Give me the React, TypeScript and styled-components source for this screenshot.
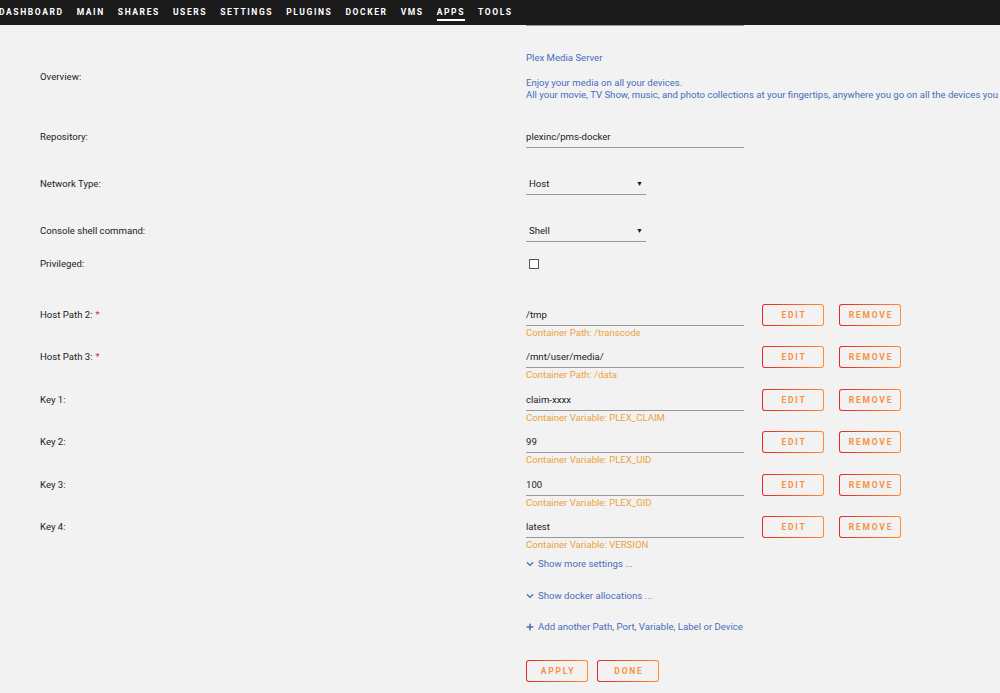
import React from 'react';
import styled, { createGlobalStyle } from 'styled-components';
import { FaChevronDown, FaPlus } from 'react-icons/fa';

const GlobalStyle = createGlobalStyle`
  html, body {
    margin: 0;
    padding: 0;
    background: #f2f2f2;
  }
  body {
    font-family: Roboto, "Liberation Sans", sans-serif;
    overflow: hidden;
    width: 1000px;
    height: 693px;
  }
`;

const TopBar = styled.div`
  height: 25px;
  background: #1c1b1b;
  display: flex;
  align-items: center;
`;

const Menu = styled.ul`
  list-style: none;
  margin: 0 0 0 -1px;
  padding: 0;
  display: flex;
  gap: 13px;
  height: 100%;
`;

const MenuItem = styled.li<{ $active?: boolean }>`
  display: flex;
  align-items: center;
  color: #fff;
  font-size: 8.5px;
  font-weight: 700;
  letter-spacing: 1.6px;

  span {
    padding-top: 3px;
    padding-bottom: 2px;
    border-bottom: 2px solid ${(p) => (p.$active ? '#fff' : 'transparent')};
  }
`;

const Form = styled.div`
  padding-left: 40px;
  font-size: 9.6px;
`;

const PrevField = styled.div`
  margin-left: 486px;
  width: 218px;
  border-bottom: 1px solid #999;
`;

const Row = styled.div<{ $top: number; $top_align?: boolean }>`
  display: flex;
  align-items: ${(p) => (p.$top_align ? 'flex-start' : 'center')};
  margin-top: ${(p) => p.$top}px;
`;

const Label = styled.div<{ $tall?: boolean }>`
  width: 486px;
  flex-shrink: 0;
  color: #1c1b1b;
  line-height: ${(p) => (p.$tall ? '21px' : '12px')};
`;

const Required = styled.span`
  color: #e22828;
  margin-left: 3px;
`;

const Overview = styled.div`
  color: #486dba;
  line-height: 12px;
  white-space: nowrap;

  p {
    margin: 0;
  }
  p + p {
    margin-top: 13px;
  }
`;

const Field = styled.input`
  box-sizing: border-box;
  width: 218px;
  height: 22px;
  margin: 0;
  padding: 0;
  border: none;
  border-bottom: 1px solid #999;
  background: transparent;
  font-family: inherit;
  font-size: 9.6px;
  color: #1c1b1b;
  outline: none;
`;

const SelectBox = styled.div`
  box-sizing: border-box;
  width: 120px;
  height: 22px;
  padding: 0 3px;
  display: flex;
  align-items: center;
  justify-content: space-between;
  border-bottom: 1px solid #999;
  color: #1c1b1b;
`;

const Caret = styled.span`
  font-size: 7px;
`;

const Check = styled.span`
  box-sizing: border-box;
  display: block;
  width: 10px;
  height: 10px;
  margin-left: 3px;
  background: #fff;
  border: 1px solid #555;
`;

const Cell = styled.div`
  display: flex;
  flex-direction: column;
`;

const Line = styled.div`
  display: flex;
  align-items: center;
`;

const Desc = styled.div`
  color: #eda23a;
  line-height: 12px;
  margin-top: 1px;
`;

const Button = styled.button<{ $gap?: number }>`
  box-sizing: border-box;
  width: 62px;
  height: 22px;
  margin: 0 0 0 ${(p) => p.$gap ?? 0}px;
  padding: 0 0 0 2px;
  border: 1px solid transparent;
  border-radius: 3px;
  background: linear-gradient(#f2f2f2, #f2f2f2) padding-box,
    linear-gradient(90deg, #e22828, #ff8c2f) border-box;
  color: #f7913e;
  font-family: inherit;
  font-size: 8.5px;
  font-weight: 700;
  letter-spacing: 1.8px;
  cursor: pointer;
`;

const Toggle = styled.div<{ $top: number }>`
  margin: ${(p) => p.$top}px 0 0 486px;
  display: flex;
  align-items: center;
  gap: 4px;
  color: #486dba;
  line-height: 12px;

  svg {
    width: 8px;
    height: 8px;
  }
`;

const Actions = styled.div`
  margin: 27px 0 0 486px;
  display: flex;
  gap: 9px;
`;

type Entry = { label: string; value: string; desc: string; required?: boolean };

const entries: Entry[] = [
  { label: 'Host Path 2:', value: '/tmp', desc: 'Container Path: /transcode', required: true },
  { label: 'Host Path 3:', value: '/mnt/user/media/', desc: 'Container Path: /data', required: true },
  { label: 'Key 1:', value: 'claim-xxxx', desc: 'Container Variable: PLEX_CLAIM' },
  { label: 'Key 2:', value: '99', desc: 'Container Variable: PLEX_UID' },
  { label: 'Key 3:', value: '100', desc: 'Container Variable: PLEX_GID' },
  { label: 'Key 4:', value: 'latest', desc: 'Container Variable: VERSION' },
];

const menu = ['DASHBOARD', 'MAIN', 'SHARES', 'USERS', 'SETTINGS', 'PLUGINS', 'DOCKER', 'VMS', 'APPS', 'TOOLS'];

const App = () => {
  return (
    <>
      <GlobalStyle />
      <TopBar>
        <Menu>
          {menu.map((m) => (
            <MenuItem key={m} $active={m === 'APPS'}>
              <span>{m}</span>
            </MenuItem>
          ))}
        </Menu>
      </TopBar>
      <Form>
        <PrevField />
        <Row $top={26}>
          <Label>Overview:</Label>
          <Overview>
            <p>Plex Media Server</p>
            <p>
              Enjoy your media on all your devices.
              <br />
              All your movie, TV Show, music, and photo collections at your fingertips, anywhere you go on all the devices you love.
            </p>
          </Overview>
        </Row>
        <Row $top={25}>
          <Label>Repository:</Label>
          <Field readOnly value="plexinc/pms-docker" />
        </Row>
        <Row $top={25}>
          <Label>Network Type:</Label>
          <SelectBox>
            Host<Caret>▼</Caret>
          </SelectBox>
        </Row>
        <Row $top={25}>
          <Label>Console shell command:</Label>
          <SelectBox>
            Shell<Caret>▼</Caret>
          </SelectBox>
        </Row>
        <Row $top={11} style={{ height: 22 }}>
          <Label>Privileged:</Label>
          <Check />
        </Row>
        {entries.map((e, i) => (
          <Row key={e.label} $top={i === 0 ? 29 : 7.4} $top_align>
            <Label $tall>
              {e.label}
              {e.required && <Required>*</Required>}
            </Label>
            <Cell>
              <Line>
                <Field readOnly value={e.value} />
                <Button $gap={18}>EDIT</Button>
                <Button $gap={15}>REMOVE</Button>
              </Line>
              <Desc>{e.desc}</Desc>
            </Cell>
          </Row>
        ))}
        <Toggle $top={7}>
          <FaChevronDown />
          Show more settings ...
        </Toggle>
        <Toggle $top={20}>
          <FaChevronDown />
          Show docker allocations ...
        </Toggle>
        <Toggle $top={19}>
          <FaPlus />
          Add another Path, Port, Variable, Label or Device
        </Toggle>
        <Actions>
          <Button>APPLY</Button>
          <Button>DONE</Button>
        </Actions>
      </Form>
    </>
  );
};

export default App;
